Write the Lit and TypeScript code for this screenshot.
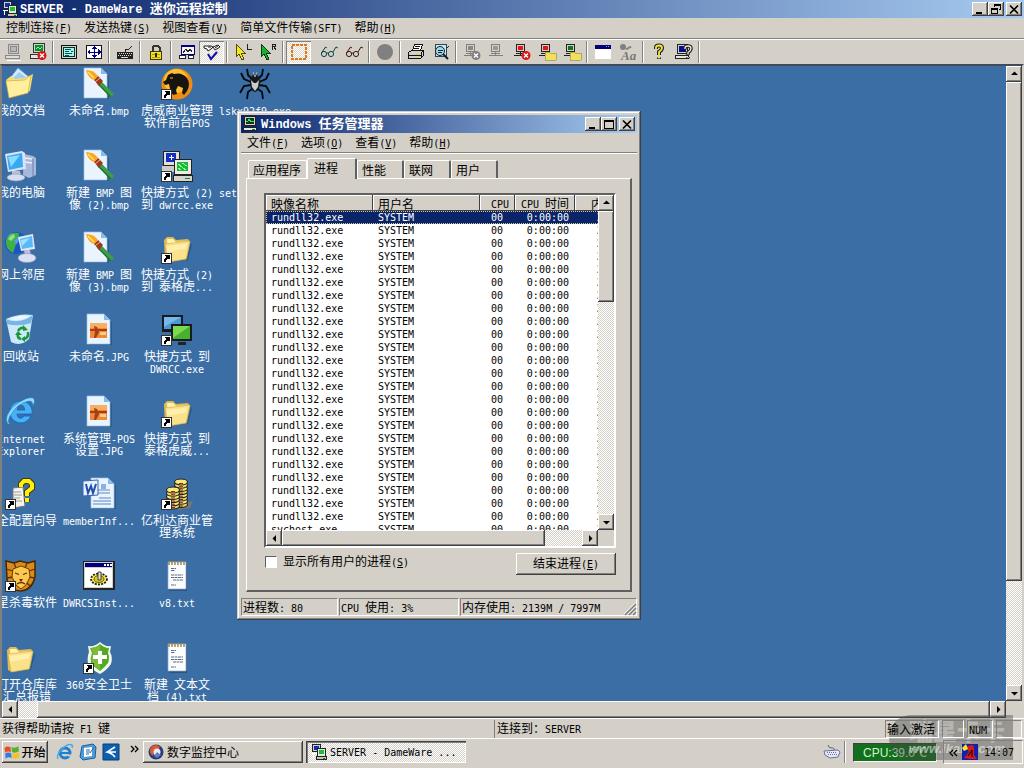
import { LitElement, html, svg, css } from "lit";
import { customElement, state } from "lit/decorators.js";

// Splits a caption into half-width (Latin) and full-width (CJK) runs.
const t = (text: string) =>
  html`<span class="t">${text.split(/([\x20-\x7e]+)/).filter(Boolean).map((p) => (/^[\x20-\x7e]/.test(p) ? html`<span class="l">${p}</span>` : p))}</span>`;
// Caption with an underlined access key.
const k = (text: string, key: string) => html`<span class="t">${text}<span class="l">(<u>${key}</u>)</span></span>`;

const ico = (body: unknown, size = 16, box = size) =>
  html`<svg class="ico" width=${size} height=${size} viewBox="0 0 ${box} ${box}" aria-hidden="true">${body}</svg>`;

/* ---- small glyphs ---- */
const arrows: Record<string, string> = { up: "M1 5h7L4.500 1.500z", down: "M1 3h7L4.500 6.500z", left: "M6 1v7L2.500 4.500z", right: "M3 1v7L6.500 4.500z" };
const arrow = (d: string) => ico(svg`<path d=${arrows[d]} fill="#000"/>`, 9);
const min = svg`<path d="M1 8h6v2H1z"/>`;
const max = svg`<path d="M0 1h10v9H0zM1 3v6h8V3z" fill-rule="evenodd"/>`;
const restore = svg`<path d="M3 0h7v6H8V5h1V2H4v1H3zM0 4h7v6H0zM1 6v3h5V6z" fill-rule="evenodd"/>`;
const close = svg`<path d="M1 1.500l8 8M9 1.500l-8 8" stroke="#000" stroke-width="1.700"/>`;

const twoPc = svg`<g shape-rendering="crispEdges"><path fill="#d4d0c8" stroke="#222" d="M1.500.500h8v7h-8z"/><path fill="#0a30c0" d="M3 2h5v4H3z"/><path d="M1 9h5v1H1zM2 10h1v4H2z" fill="#fff"/><path fill="#e8e6e0" stroke="#222" d="M6.500 4.500h8v8h-8z"/><path fill="#18c030" d="M8 6h5v4H8z"/><path fill="#c8c4bc" stroke="#222" d="M5.500 12.500h10v3h-10z"/><path d="M12 14h2" stroke="#080"/></g>`;
const taskIcon = svg`<g shape-rendering="crispEdges"><path fill="#d4d0c8" stroke="#222" d="M1.500.500h11v9h-11z"/><path fill="#043c20" d="M3 2h8v6H3z"/><path d="M3 5h2l1-2 2 3 1-1h2" stroke="#3fe060" fill="none"/><path fill="#e8e6e0" stroke="#222" d="M.500 11.500h13v3H.500z"/><path d="M9 13h3" stroke="#080"/></g>`;

/* ---- toolbar ---- */
const pc = (screen: string, body = "#d4d0c8", line = "#222") =>
  svg`<path fill=${body} stroke=${line} d="M3.500 1.500h8v7h-8z"/><path fill=${screen} d="M5 3h5v4H5z"/><path d="M7.500 9v3M1 12.500h14M3 10.500h9" stroke=${line}/>`;
const redX = svg`<g shape-rendering="auto"><circle cx="13" cy="12.500" r="4.500" fill="#d81818"/><path d="M11 10.500l4 4m0-4l-4 4" stroke="#fff" stroke-width="1.300"/></g>`;
const greyX = svg`<g shape-rendering="auto"><circle cx="13" cy="12.500" r="4.500" fill="#808080"/><path d="M11 10.500l4 4m0-4l-4 4" stroke="#fff" stroke-width="1.300"/></g>`;
const folderS = svg`<path d="M7 9h4l1 1h6v7H7z" fill="#f0e060" stroke="#988830" stroke-width=".6"/>`;
const cursor = (c: string, dark: string) => svg`<path d="M2 1v13l3-3 3 6 2-1-3-6h4z" fill=${c} stroke=${dark}/>`;
const glasses = (dark: string) =>
  svg`<g fill="none" stroke=${dark} shape-rendering="auto"><circle cx="4" cy="11" r="2.600"/><circle cx="11" cy="11" r="2.600"/><path d="M6.500 10h2M1.500 10l4-6 1.500 1M13 9l3-5 2 1"/></g>`;

type Tool = { n: string; i?: unknown; on?: boolean; shift?: boolean };
const sep: Tool = { n: "|" };
const tools: Tool[] = [
  { n: "连接", i: svg`<path fill="#c8c8c8" stroke="#888" d="M4.500 1.500h10v9h-10z"/><path fill="#b8b8b8" stroke="#888" d="M6.500 3.500h6v5h-6z"/><path fill="#ddd" stroke="#888" d="M1.500 12.500h14v3h-14z"/><path d="M3 17h14" stroke="#fff"/>` },
  { n: "断开", i: svg`<path fill="#d4d0c8" stroke="#333" d="M4.500.500h11v9h-11z"/><path fill="#0a9030" d="M6 2h8v6H6z"/><path d="M7 6l2-2 2 2 2-2" stroke="#8f8" fill="none"/><path fill="#e8e4dc" stroke="#333" d="M1.500 11.500h14v4h-14z"/>${redX}` },
  sep,
  { n: "全屏", i: svg`<path fill="#d4d0c8" stroke="#111" d="M1.500 2.500h15v13h-15z"/><path fill="#a8f0e8" stroke="#033" d="M3.500 4.500h11v9h-11z"/><path d="M5 6.500h6M5 8.500h4M5 10.500h7M11 8.500h2M5 12h4" stroke="#055"/>` },
  { n: "缩放", i: svg`<path fill="#fff" stroke="#112" d="M1.500 2.500h15v13h-15z"/><path d="M9 4v10M3 9h12" stroke="#008" /><path fill="#008" d="M9 3l3 3H6zM9 15l3-3H6zM2 9l3-3v6zM16 9l-3-3v6z"/>` },
  sep,
  { n: "发送键", i: svg`<path d="M9 9V6h4l3-3" fill="none" stroke="#222"/><path fill="#222" d="M1 9h16v7H1z"/><path stroke="#ddd" stroke-dasharray="1 1" d="M3 10.500h13M2 12.500h13"/><path stroke="#ddd" d="M5 14.500h7"/>` },
  sep,
  { n: "锁定", i: svg`<path d="M5.500 8V4.500l2-2h3l2 2V8" fill="none" stroke="#333" stroke-width="2"/><path fill="#f0e020" stroke="#443800" d="M3.500 8.500h11v8h-11z"/><path d="M5 11h8M5 14h8" stroke="#b0a000"/><path d="M8 10h2v4H8z" fill="#222"/>` },
  sep,
  { n: "视图选项", i: svg`<path fill="#f4f4f4" stroke="#008" d="M3.500 2.500h13v9h-13z"/><path d="M4 3h12" stroke="#008" stroke-width="2"/><path d="M5 10l3-4 2 3 2-3 2 3" fill="none" stroke="#222"/><path fill="#fff" stroke="#222" d="M1.500 12.500h6v3h-6zM10.500 12.500h5v3h-5z"/>` },
  { n: "监视", on: true, i: svg`<g shape-rendering="auto"><path d="M1 3h7l2 1-2 2-3 2-1-2-3-1zM10 4l5-2 2 2-5 3zM5 4h3M12 5l3-2" fill="#fff" stroke="#222"/><path d="M5 11l3 5 6-7" fill="none" stroke="#1010a0" stroke-width="2"/></g>` },
  sep,
  { n: "左键", i: svg`${cursor("#f0e820", "#554c00")}<path d="M13.500 1v5h4" fill="none" stroke="#222"/>` },
  { n: "右键", i: svg`${cursor("#18b030", "#043c10")}<path d="M13.500 7V1.500h3v2h-3M15 4l2 3" fill="none" stroke="#222"/>` },
  sep,
  { n: "选框", on: true, i: svg`<path fill="none" stroke="#e07818" stroke-width="2" stroke-dasharray="3 1" d="M2 2h14v14H2z"/>` },
  { n: "查看", shift: true, i: glasses("#054848") },
  { n: "只读", i: glasses("#401818") },
  sep,
  { n: "录制", i: svg`<circle cx="9" cy="9" r="8" fill="#808080" shape-rendering="auto"/>` },
  sep,
  { n: "打印", i: svg`<path fill="#fff" stroke="#111" d="M5.500 7.500l2-6h8l-2 6z"/><path d="M8 3.500h5M7 5.500h5" stroke="#111"/><path fill="#d0d0c8" stroke="#111" d="M1.500 9.500l3-2h12v5l-3 3h-12z"/><path d="M2 12.500h12M14 15v-5l3-3" stroke="#111" fill="none"/><path d="M9 11h3" stroke="#dd0" />` },
  { n: "预览", i: svg`<path fill="#c8e8f0" stroke="#345" d="M3.500 1.500h11v12h-11z"/><g shape-rendering="auto"><circle cx="8" cy="8" r="4.500" fill="#9fd8e8" stroke="#123"/><path d="M11 11l5 5" stroke="#123" stroke-width="2"/></g><path d="M6 7h5M6 9h4M15 5l2-2" stroke="#222"/>` },
  sep,
  { n: "停止服务", i: svg`${pc("#888", "#d4d0c8", "#808080")}${greyX}` },
  { n: "安装服务", i: pc("#999", "#d4d0c8", "#808080") },
  { n: "移除服务", i: svg`${pc("#e01818")}${redX}` },
  { n: "远程文件", i: svg`${pc("#e01818")}${folderS}` },
  { n: "本地文件", i: svg`${pc("#087818")}${folderS}` },
  sep,
  { n: "窗口", i: svg`<path fill="#fff" d="M1 2h16v14H1z"/><path fill="#000078" d="M1 2h16v4H1z"/><path d="M12 3.500h4" stroke="#99f" stroke-dasharray="1 1"/>` },
  { n: "字体", i: svg`<g shape-rendering="auto"><circle cx="4" cy="4" r="3" fill="#808080"/><path d="M6 6l5-3 2 1-5 3z" fill="#808080"/><text x="2" y="17" font-family="Liberation Serif" font-style="italic" font-weight="bold" font-size="13" fill="#777">Aa</text></g>` },
  sep,
  { n: "帮助", i: svg`<g shape-rendering="auto" fill="none"><path d="M6 6V4.500Q6 2.500 9 2.500t3 2.500q0 2-3 4v3M9 14.500v1.500" stroke="#222" stroke-width="4"/><path d="M6 6V4.500Q6 2.500 9 2.500t3 2.500q0 2-3 4v3M9 14v1.500" stroke="#f4ec30" stroke-width="1.800"/></g>` },
  { n: "关于", i: svg`<path fill="#d4d0c8" stroke="#222" d="M2.500 1.500h10v9h-10z"/><path fill="#001090" d="M4 3h7v6H4z"/><path fill="#e8e4dc" stroke="#222" d="M.500 12.500h13v3H.500z"/><g shape-rendering="auto" fill="none"><path d="M10 6.500V5q0-2 3-2t3 2.500q0 2-3 4v2.500M13 14v1.500" stroke="#222" stroke-width="3.500"/><path d="M10 6V5q0-2 3-2t3 2.500q0 2-3 4v2M13 14v1" stroke="#f0ecd0" stroke-width="1.300"/></g>` },
  sep,
];

/* ---- desktop ---- */
const short = svg`<g shape-rendering="crispEdges"><path fill="#fff" stroke="#333" d="M.500 21.500h10v10H.500z"/><path d="M4 23h5v5L7.500 26.500Q4.500 27 5 30H3.500Q2.500 26.500 5.800 25z" fill="#000"/></g>`;
const folderShape = (x: number) =>
  svg`<g transform="translate(${x} 0)"><path d="M3 28L2 8l3-3h6l3 3 12-1 2 3-3 17-18 3z" fill="#e0bc50"/><path d="M5 7h6l3 3 11-1v15L6 27z" fill="#fff3b0"/><path d="M3 12l25-3-4 18-18 3z" fill="#fae28c" stroke="#d0a840" stroke-width=".6"/><path d="M5 14l20-2.500-1 5L5 20z" fill="#fff2b4" opacity=".8"/><path d="M29 11l1 2-4 15-2 1z" fill="#204878" opacity=".5"/></g>`;
const page = svg`<path d="M5 1h17l6 6v23H5z" fill="#1c3c66" opacity=".4" transform="translate(1 1)"/><path d="M4 0h17l6 6v24H4z" fill="#eaf4fe" stroke="#9cc0e8" stroke-width=".7"/><path d="M21 0v6h6z" fill="#88b8ec"/>`;
const bmp = svg`<g transform="translate(-3 0)">${page}</g><path d="M14 15l3-3 14 14-3 4z" fill="#3c9c48"/><path d="M15 16l13 13" stroke="#1c6c30" stroke-width="1.200"/><path d="M11 12l4-4 5 5-4 5z" fill="#a03818"/><path d="M12 14l5-4" stroke="#e0b8a0"/><path d="M3 2q8 0 12 6l-4 4Q5 10 3 2z" fill="#f8a818"/><path d="M5 4l6 6" stroke="#ffe070" stroke-width="1.500"/>`;
const jpg = svg`${page}<path d="M7 9h17v15H7z" fill="#f08838"/><path d="M7 9h17v5H7z" fill="#f8b060"/><path d="M7 15h17v2H7z" fill="#b03818"/><path d="M11 12l3 1 2 5-3 6h-2l1-7z" fill="#a04018"/><path d="M17 18h6v3h-6z" fill="#ffd080"/>`;
const txt = svg`<path d="M8 3h18v28H8z" fill="#1c3c66" opacity=".5"/><path d="M7 2h18v27H7z" fill="#fafcff" stroke="#98a8c0" stroke-width=".7"/><path d="M8 1v4M11 1v4M14 1v4M17 1v4M20 1v4M23 1v4" stroke="#a08850" stroke-width="1.500"/><path d="M10 8.500h5M10 10.500h4M10 15h12M10 17.500h12M12 20h10M10 25h5" stroke="#5c6c80" stroke-dasharray="3 .5"/>`;
const xpPc = svg`<path d="M19 4l9 2 3 2v17l-7 3-6-3z" fill="#a8b8dc"/><path d="M20 8l7 1M20 12l7 1" stroke="#eef" stroke-width="1.500"/><path d="M28 9v18" stroke="#7080b0"/><path d="M0 4l17-3 3 2 1 16-18 3z" fill="#d8e4f8"/><path d="M2 6l15-3 1 14-14 3z" fill="#38a8f0"/><path d="M3 7l12-2-9 12z" fill="#88dcff"/><path d="M7 21h8l1 5H7z" fill="#b8c0dc"/><ellipse cx="11" cy="27.500" rx="9" ry="3.500" fill="#d8dcf0" stroke="#8890b0" stroke-width=".6"/>`;
const net = svg`<circle cx="11" cy="11" r="11" fill="#1858c0"/><circle cx="8" cy="7" r="6" fill="#50a0f0"/><path d="M1 8q4-9 13-7 0 6-5 7l2 4-3 9q-6-3-7-9z" fill="#40b048"/><path d="M3 7q2-4 6-5l1 3-4 4z" fill="#90e080"/><path d="M13 5l15-3 2 15-14 2z" fill="#e0e8f8"/><path d="M15 7l12-3 1 11-11 2z" fill="#58b8f8"/><path d="M16 8l9-2-8 8z" fill="#a0e0ff"/><path d="M19 18h6l1 6h-6z" fill="#b8c0dc"/><ellipse cx="22" cy="26" rx="9" ry="4.500" fill="#dce0f4" stroke="#8890b0" stroke-width=".6"/>`;
const bin = svg`<path d="M1 5q13-6 27-4l-4 24q-8 8-18 3z" fill="#cce8fa"/><path d="M1 5q13 6 27-4l-2 8Q14 13 2 10z" fill="#78b4e4"/><path d="M4 5q11-5 21-3-9 6-21 3z" fill="#eaf8ff"/><g fill="none" stroke="#189838" stroke-width="2.600"><path d="M13 17q3-5 7-2M23 18q1 6-4 7M16 25q-4-1-3-5"/></g><path d="M18 11l5 5-5 1zM20 22v6l-4-3zM10 21l3-4 4 4z" fill="#189838"/>`;
const ie = svg`<path d="M16 5a11 11 0 1 0 10 15h-7q-3 4-6 1-1-1-1-3h15A11 11 0 0 0 16 5zM12 14q1-5 4-5t4 5z" fill="#48b0f4" stroke="#1068b8" stroke-width=".8"/><path d="M3 28q-5-7 6-18Q22 0 28 2q3 2 0 8 0-5-4-5Q12 7 5 20q-3 6 0 8z" fill="#8cdcff" stroke="#2078c0" stroke-width=".5"/>`;
const question = svg`<path d="M8 10l10-1 2 19-12 2z" fill="#f4f4ec" stroke="#777"/><path d="M9 14h7M9 17h8M9 20h6M9 23h8" stroke="#999"/><path d="M16 9V6l3-3h5l3 3v4l-5 4v4M22 21v3" fill="none" stroke="#443c00" stroke-width="6"/><path d="M16 9V6l3-3h5l3 3v4l-5 4v4M22 20v4" fill="none" stroke="#ffee10" stroke-width="4"/>`;
const word = svg`<g transform="translate(4 0)">${page}</g><path d="M14 12h13M14 15h13M16 20h12M10 23h18M10 26h18" stroke="#5888c8"/><path d="M18 6h5v5h-5z" fill="#8cb0e0"/><path d="M0 3l15-1v15L0 18z" fill="#e8f0fc" stroke="#3868b0"/><path d="M3 6l2 9 3-7 2 7 3-9" fill="none" stroke="#2050a8" stroke-width="2"/>`;
const coins = (x: number, y: number, n: number) =>
  Array.from({ length: n }, (_, i) => svg`<ellipse cx=${x} cy=${y + (n - 1 - i) * 3.2} rx="6.500" ry="3" fill=${i % 2 ? "#f4ec78" : "#e8d860"} stroke="#222" stroke-width="1.100"/><path d="M${x - 2} ${y + (n - 1 - i) * 3.2 + 1.5}h4" stroke="#a02020"/>`);
const coinIcon = svg`<path d="M20 26l12-3-3 7-12 2z" fill="#777"/>${coins(20, 4, 8)}${coins(12, 12, 6)}`;
const panther = svg`<circle cx="16" cy="16" r="15.500" fill="#f08c10"/><circle cx="15" cy="13" r="12" fill="#ffc030"/><path d="M5 12l2-5 4-2 2 1q8-2 13 4 4 6 0 13l-3 4-2-2 1-5-5-2-2 4 1 4-4 1-3-6-1-5-4 1-2-3z" fill="#181410"/><path d="M9 10h3" stroke="#ffb020"/>`;
const spider = svg`<g fill="none" stroke="#080808" stroke-width="1.800"><path d="M13 11L9 7 8 1M12 14L5 11 2 5M12 17l-7 1-4 7M13 21l-4 3-1 7M19 11l4-4 1-6M20 14l7-3 3-6M20 17l7 1 4 7M19 21l4 3 1 7"/></g><ellipse cx="16" cy="15" rx="5" ry="9" fill="#181818"/><path d="M12 12l3 3h2l3-3-1 7-3 4-3-4z" fill="#c8ccd0"/><path d="M14 4l2 5 2-5" stroke="#aaa" fill="none"/>`;
const pcs = svg`<g shape-rendering="crispEdges"><path d="M2 1h16v14H2z" fill="#e4e0d8" stroke="#222"/><path d="M5 3h10v9H5z" fill="#1030c8"/><path d="M8 7.500h5M10.500 5v5" stroke="#fff"/><path d="M1 16h12v6H1z" fill="#d0ccc4"/><path d="M13 9h17v15H13z" fill="#f0ece4" stroke="#222"/><path d="M16 12h11v9H16z" fill="#18b838"/><path d="M17 14l8 6M17 18l3 2M21 13l5 3" stroke="#9f9"/><path d="M12 25h19v6H12z" fill="#d8d4cc" stroke="#222"/><path d="M24 28h5" stroke="#084"/></g>`;
const monitors = svg`<path d="M1 1h21v17H1z" fill="#181c20"/><path d="M3 3h17v12H3z" fill="#4898d8"/><path d="M3 3h17L3 13z" fill="#78b8e8"/><path d="M10 10h21v17H10z" fill="#181c20"/><path d="M12 12h17v13H12z" fill="#48b030"/><path d="M12 12h17L12 24z" fill="#80d850"/><path d="M17 28h8v3h-8z" fill="#222"/>`;
const lion = svg`<path d="M1 1l8 2 6-2 8 2 7-2v16q-3 13-14 14Q3 30 2 18z" fill="#dc8a1c" stroke="#442800" stroke-width="1.500"/><path d="M1 9l7 2M30 9l-6 2M2 18l6-1M30 18l-6-1M6 26l4-4M25 26l-4-4M9 3l2 5M22 3l-2 5" stroke="#5c3000" stroke-width="1.300"/><path d="M8 9l8-3 8 3 1 8-4 8-5 4-5-4-4-8z" fill="#fcc850" stroke="#6c3c08"/><path d="M10 13l4 1.500M22 13l-4 1.500M12 24q4-3 8 0" fill="none" stroke="#5c3000" stroke-width="1.300"/><path d="M14 19h4l-2 3z" fill="#5c3000"/>`;
const install = svg`<g shape-rendering="crispEdges"><path d="M0 1h32v29H0z" fill="#222"/><path d="M1 2h29v26H1z" fill="#d4d0c8"/><path d="M2 8h27v19H2z" fill="#fff"/><path d="M2 3h27v4H2z" fill="#000080"/><path d="M21 5h8" stroke="#fff" stroke-width="2" stroke-dasharray="2 1"/></g><ellipse cx="16" cy="19" rx="8" ry="5.500" fill="#f4e850" stroke="#222" stroke-width="1.800" stroke-dasharray="2 1.200"/><ellipse cx="16" cy="19" rx="5" ry="3.500" fill="#d8c830" stroke="#443c00" stroke-width=".8"/><path d="M15 12h3v8h-3z" fill="#ddd" stroke="#222" stroke-width=".8"/>`;
const shield = svg`<path d="M5 4q7 1 12-4 5 5 11 4l-1 6q3 5 1 12-4 6-11 10Q9 28 5 22q-1-7 1-12z" fill="#f0f8e8"/><path d="M7 6q6 0 10-4 4 4 9 4l-1 5q2 5 0 10-3 4-8 8-6-4-9-8-1-5 1-10z" fill="#58a828"/><path d="M17 3v25q-5-3-8-7-1-5 1-10L8 6q5 0 9-3z" fill="#7cbc38"/><path d="M15 9h4v4h5v4h-5v5h-4v-5h-5v-4h5z" fill="#fff"/>`;
const docs = svg`<path d="M13 0l12 10-9 9L6 9z" fill="#d8ecff" stroke="#78a8d8"/><path d="M14 4l8 6-8 6-6-6z" fill="#a0ccf4"/><path d="M1 12l5-4 4 3 10-1 8-4-3 17-19 6z" fill="#f8e070"/><path d="M1 13l19-1 6-5-3 18-19 5z" fill="#fff0a0" stroke="#d8a838" stroke-width=".7"/>`;

type Item = { i: unknown; s?: boolean; l: string[] } | null;
const items: Item[] = [
  { i: docs, l: ["我的文档"] }, { i: bmp, l: ["未命名.bmp"] }, { i: panther, s: true, l: ["虎威商业管理", "软件前台POS"] }, { i: spider, l: ["lskx92f9.exe"] },
  { i: xpPc, l: ["我的电脑"] }, { i: bmp, l: ["新建 BMP 图", "像 (2).bmp"] }, { i: pcs, s: true, l: ["快捷方式 (2)", "到 dwrcc.exe"] }, { i: svg``, l: ["setup001.exe"] },
  { i: net, l: ["网上邻居"] }, { i: bmp, l: ["新建 BMP 图", "像 (3).bmp"] }, { i: folderShape(1), s: true, l: ["快捷方式 (2)", "到 泰格虎..."] }, null,
  { i: bin, l: ["回收站"] }, { i: jpg, l: ["未命名.JPG"] }, { i: monitors, s: true, l: ["快捷方式 到", "DWRCC.exe"] }, null,
  { i: ie, l: ["Internet", "Explorer"] }, { i: jpg, l: ["系统管理-POS", "设置.JPG"] }, { i: folderShape(1), s: true, l: ["快捷方式 到", "泰格虎威..."] }, null,
  { i: question, s: true, l: ["安全配置向导"] }, { i: word, l: ["memberInf..."] }, { i: coinIcon, s: true, l: ["亿利达商业管", "理系统"] }, null,
  { i: lion, s: true, l: ["瑞星杀毒软件"] }, { i: install, l: ["DWRCSInst..."] }, { i: txt, l: ["v8.txt"] }, null,
  { i: folderShape(0), l: ["　打开仓库库", "　汇总报错"] }, { i: shield, s: true, l: ["360安全卫士"] }, { i: txt, l: ["新建 文本文", "档 (4).txt"] }, null,
];

const processes = [...Array(24).fill("rundll32.exe"), "svchost.exe"];

@customElement("app-root")
export class AppRoot extends LitElement {
  @state() private tab = 1;
  @state() private selected = 0;

  static styles = css`
    :host { display: block; height: 100vh; overflow: hidden; position: relative; background: #d4d0c8; color: #000; font: 12px/16px "Noto Sans CJK SC", sans-serif; }
    * { box-sizing: border-box; }
    button { font: inherit; color: inherit; border: 0; padding: 0; margin: 0; background: #d4d0c8; display: flex; align-items: center; justify-content: center; flex: none; }
    .ico { display: block; flex: none; overflow: visible; }
    .t { white-space: pre; }
    .l { font-family: "DejaVu Sans Mono", monospace; font-size: 10px; }
    .app { display: flex; flex-direction: column; height: 100%; }
    .raised { box-shadow: inset -1px -1px #404040, inset 1px 1px #fff, inset -2px -2px #808080; }
    .dither { background: repeating-conic-gradient(#fff 0 25%, #d4d0c8 0 50%) 0 0 / 2px 2px; }

    .title { display: flex; align-items: center; height: 18px; flex: none; gap: 2px; padding: 0 2px; color: #fff; font-weight: bold; background: linear-gradient(90deg, #0a246a, #a6caf0); }
    .title .t { flex: 1; font-size: 13px; }
    .title .l { font-family: "Liberation Mono", monospace; font-size: 12px; }
    .ctl { display: flex; }
    .ctl button { width: 16px; height: 14px; }
    .menu { display: flex; align-items: center; height: 20px; gap: 12px; padding: 0 6px; flex: none; }
    .menu button { background: none; }
    .toolbar { display: flex; align-items: center; height: 26px; flex: none; border-top: 1px solid #808080; box-shadow: inset 0 1px #fff; padding-top: 1px; overflow: hidden; }
    .toolbar button { width: 25px; height: 23px; background: none; }
    .toolbar button.on { background: repeating-conic-gradient(#fff 0 25%, #dcd8d0 0 50%) 0 0 / 2px 2px; box-shadow: inset 1px 1px #808080, inset -1px -1px #fff; }
    .toolbar .shift { margin-left: 5px; }
    .sep { width: 2px; height: 22px; margin: 0 2px; border-left: 1px solid #808080; border-right: 1px solid #fff; flex: none; }

    .frame { flex: 1; min-height: 0; display: grid; grid-template-columns: 1fr 16px; grid-template-rows: 1fr 17px; border: 2px solid #808080; border-top-color: #404a58; border-right-color: #d4d0c8; border-bottom: 0; }
    .desktop { position: relative; overflow: hidden; background: #3a6ea5; color: #fff; }
    .icons { display: grid; grid-template-columns: repeat(4, 78px); grid-auto-rows: 82px; margin: 2px 0 0 -20px; }
    .item { display: flex; flex-direction: column; align-items: center; gap: 4px; line-height: 12px; color: #fff; text-decoration: none; }
    .lines { display: flex; flex-direction: column; align-items: center; }
    .lines .t { height: 12px; }

    .vbar, .hbar { display: flex; }
    .vbar { flex-direction: column; }
    .vbar button { width: 16px; height: 16px; }
    .hbar button { width: 16px; height: 100%; }

    .win { position: absolute; left: 235px; top: 45px; width: 404px; padding: 4px; color: #000; background: #d4d0c8; box-shadow: inset -1px -1px #404040, inset 1px 1px #d4d0c8, inset -2px -2px #808080, inset 2px 2px #fff; }
    .win .menu { height: 21px; border-bottom: 1px solid #fff; box-shadow: inset 0 -1px #808080; }
    .body { padding: 3px 5px 6px; }
    .tabs { display: flex; align-items: flex-end; padding-left: 2px; height: 21px; }
    .tabs button { height: 18px; min-width: 47px; padding: 0 5px 0 4px; justify-content: flex-start; border: 1px solid #fff; border-bottom: 0; border-right: 2px solid #606060; border-radius: 2px 2px 0 0; }
    .tabs button:first-child { border-right: 1px solid #fff; min-width: 59px; }
    .tabs button.on { height: 21px; min-width: 50px; padding-bottom: 2px; margin-bottom: -1px; padding-left: 6px; position: relative; }
    .panel { border: 1px solid #fff; border-right: 2px solid #606060; border-bottom: 2px solid #606060; padding: 14px 14px 15px 17px; }
    .list { display: grid; grid-template-columns: 1fr 16px; grid-template-rows: 335px 16px; border: 2px solid #606060; border-right-color: #fff; border-bottom-color: #fff; }
    .rows { background: #fff; overflow: hidden; }
    table { border-collapse: separate; border-spacing: 0; table-layout: fixed; width: 376px; line-height: 13px; }
    th, td { padding: 0 5px; text-align: left; font-weight: normal; overflow: hidden; white-space: nowrap; }
    td { height: 13px; }
    th { height: 16px; background: #d4d0c8; box-shadow: inset -1px -1px #404040, inset 1px 1px #fff; }
    .r { text-align: right; padding-right: 6px; }
    td.cpu-col { padding-right: 12px; }
    .mem { text-align: right; padding-right: 3px; }
    td .l { display: block; line-height: 13px; }
    tr.sel td { background: #0a246a; color: #fff; }
    tr.sel { outline: 1px dotted #d8c890; outline-offset: -1px; }
    .foot { display: flex; align-items: flex-start; justify-content: space-between; margin-top: 5px; }
    .foot label { display: flex; align-items: center; gap: 6px; margin-left: 1px; }
    .foot input { appearance: none; width: 12px; height: 12px; margin: 0; background: #fff; border: 1px solid #606060; border-right-color: #fff; border-bottom-color: #fff; }
    .foot button { width: 100px; height: 22px; }
    .wstat { display: grid; grid-template-columns: 97px 120px 1fr; gap: 1px; position: relative; }
    .cell { border: 1px solid #808080; border-right-color: #fff; border-bottom-color: #fff; height: 18px; padding-left: 1px; line-height: 16px; }
    .w54 { width: 54px; }
    .w22 { width: 22px; }
    .w26 { width: 26px; }
    .grip { position: absolute; right: 1px; bottom: 1px; }

    .status { display: flex; align-items: center; height: 20px; flex: none; border-top: 1px solid #fff; padding: 0 2px; gap: 3px; }
    .grow { flex: 1; }
    .conn { flex: 0 1 388px; border-left: 1px solid #808080; padding-left: 2px; }
    .taskbar { display: flex; align-items: center; height: 30px; flex: none; border-top: 1px solid #fff; padding: 0 1px 3px 2px; }
    .start { width: 46px; height: 22px; gap: 1px; }
    .start b { font-weight: 500; }
    .quick { display: flex; gap: 7px; margin: 0 11px 0 9px; }
    .quick button { background: none; }
    .more { background: none; width: 13px; padding-bottom: 8px; justify-content: flex-start; }
    .taskbar .task { flex: 0 1 160px; height: 22px; justify-content: flex-start; padding-left: 5px; gap: 3px; margin-right: 3px; overflow: hidden; }
    .task.on { box-shadow: inset 1px 1px #404040, inset 2px 2px #808080, inset -1px -1px #fff; }
    .tray { display: flex; align-items: center; margin-left: auto; }
    .tray .sep { margin: 0 7px 0 4px; }
    .cpu, .clock, .status .cell { position: relative; }
    .cpu { width: 84px; height: 19px; margin-right: 6px; background: #12701c; border: 1px solid #404040; border-right-color: #fff; border-bottom-color: #fff; color: #d0f4d0; font: 12px/18px "Liberation Sans", "Noto Sans CJK SC", sans-serif; text-align: center; }
    .clock { display: flex; align-items: center; width: 80px; height: 24px; gap: 4px; padding-left: 5px; border: 1px solid #808080; border-right-color: #fff; border-bottom-color: #fff; }
    .clock time { margin-left: 2px; }
    .mark { position: absolute; right: 11px; bottom: 8px; width: 124px; height: 45px; border-radius: 22px 0 0 22px; background: rgba(70, 70, 66, 0.42); color: rgba(235, 235, 230, 0.4); display: flex; flex-direction: column; align-items: flex-end; padding: 3px 8px; pointer-events: none; }
    .mark b { font-size: 24px; line-height: 24px; font-weight: 900; }
    .mark i { font: italic bold 13px/13px "Liberation Sans", sans-serif; color: rgba(240, 240, 235, 0.6); }
    /* Captions of the status cells and the clock stay readable above the badge. */
    .status .cell, .clock { z-index: 1; }
  `;

  private bar(v: boolean, thumb: string, before: string, after: string) {
    const [a, b] = v ? ["up", "down"] : ["left", "right"];
    return html`<div class=${v ? "vbar" : "hbar"}>
      <button class="raised" aria-label=${a}>${arrow(a)}</button>
      <div class="dither" style="flex:0 0 ${before}"></div>
      <div class="raised" style="flex:${thumb} 1 0px"></div>
      <div class="dither" style="flex:${after} 1 0px"></div>
      <button class="raised" aria-label=${b}>${arrow(b)}</button>
    </div>`;
  }

  private controls(middle: unknown) {
    return html`<div class="ctl">
        <button class="raised" aria-label="最小化">${ico(min, 10)}</button>
        <button class="raised" aria-label="最大化">${ico(middle, 10)}</button>
      </div>
      <div class="ctl"><button class="raised" aria-label="关闭">${ico(close, 10)}</button></div>`;
  }

  private manager() {
    return html`<section class="win">
      <div class="title">${ico(taskIcon)}${t("Windows 任务管理器")}${this.controls(max)}</div>
      <nav class="menu"><button>${k("文件", "F")}</button><button>${k("选项", "O")}</button><button>${k("查看", "V")}</button><button>${k("帮助", "H")}</button></nav>
      <div class="body">
        <div class="tabs" role="tablist">
          ${["应用程序", "进程", "性能", "联网", "用户"].map((n, i) => html`<button role="tab" class=${i === this.tab ? "on" : ""} @click=${() => (this.tab = i)}>${n}</button>`)}
        </div>
        <div class="panel">
          <div class="list">
            <div class="rows">
              <table>
                <colgroup><col style="width:107px" /><col style="width:107px" /><col style="width:35px" /><col style="width:60px" /><col style="width:67px" /></colgroup>
                <thead><tr><th>映像名称</th><th>用户名</th><th class="r">${t("CPU")}</th><th class="r">${t("CPU 时间")}</th><th class="mem">内存使用</th></tr></thead>
                <tbody>
                  ${processes.map((p, i) => html`<tr class=${i === this.selected ? "sel" : ""} @click=${() => (this.selected = i)}>
                    <td>${t(p)}</td><td>${t("SYSTEM")}</td><td class="r cpu-col">${t("00")}</td><td class="r">${t("0:00:00")}</td><td class="mem">${t("2,140 K")}</td></tr>`)}
                </tbody>
              </table>
            </div>
            ${this.bar(true, "91", "0px", "212")}
            ${this.bar(false, "262", "0px", "37")}
            <div></div>
          </div>
          <div class="foot">
            <label><input type="checkbox" />${k("显示所有用户的进程", "S")}</label>
            <button class="raised">${k("结束进程", "E")}</button>
          </div>
        </div>
      </div>
      <div class="wstat">
        <div class="cell">${t("进程数: 80")}</div><div class="cell">${t("CPU 使用: 3%")}</div><div class="cell">${t("内存使用: 2139M / 7997M")}</div>
        <div class="grip">${ico(svg`<path d="M1 12L12 1M5 12l7-7M9 12l3-3" stroke="#808080" stroke-width="1.500"/><path d="M0 11L11 0M4 11l7-7M8 11l3-3" stroke="#fff" stroke-width=".7"/>`, 12)}</div>
      </div>
    </section>`;
  }

  render() {
    return html`<div class="app">
      <header class="title">${ico(twoPc)}${t("SERVER - DameWare 迷你远程控制")}${this.controls(restore)}</header>
      <nav class="menu">
        <button>${k("控制连接", "F")}</button><button>${k("发送热键", "S")}</button><button>${k("视图查看", "V")}</button><button>${t("简单文件传输(SFT)")}</button><button>${k("帮助", "H")}</button>
      </nav>
      <div class="toolbar">
        ${tools.map((b) => b.n === "|" ? html`<div class="sep"></div>` : html`<button class="${b.on ? "on" : ""} ${b.shift ? "shift" : ""}" aria-label=${b.n}>${ico(svg`<g shape-rendering="crispEdges">${b.i}</g>`, 18)}</button>`)}
      </div>
      <main class="frame">
        <div class="desktop">
          <div class="icons">
            ${items.map((d) => d ? html`<a class="item" href="#">${ico(svg`${d.i}${d.s ? short : ""}`, 32)}<span class="lines">${d.l.map(t)}</span></a>` : html`<span></span>`)}
          </div>
          ${this.manager()}
        </div>
        ${this.bar(true, "498", "0px", "104")}
        ${this.bar(false, "1", "19px", "0")}
        <div></div>
      </main>
      <footer class="status">
        <span class="grow">${t("获得帮助请按 F1 键")}</span>
        <span class="conn">${t("连接到：SERVER")}</span>
        <span class="cell w54">输入激活</span><span class="cell w22"></span><span class="cell w26">${t("NUM")}</span><span class="cell w26"></span>
      </footer>
      <div class="taskbar">
        <button class="start raised">${ico(svg`<g transform="rotate(-6 8 8)"><path d="M1 3q3-2 6 0v5q-3-2-6 0z" fill="#e85020"/><path d="M8 3q3 2 7 0v5q-4 2-7 0z" fill="#58b030"/><path d="M1 9q3-2 6 0v5q-3-2-6 0z" fill="#3878e0"/><path d="M8 9q3 2 7 0v5q-4 2-7 0z" fill="#f8c020"/></g>`)}<b>开始</b></button>
        <div class="quick">
          <button aria-label="Internet Explorer">${ico(svg`<circle cx="8" cy="9" r="5" fill="none" stroke="#1c80d0" stroke-width="3"/><path d="M4 9h10" stroke="#1c80d0" stroke-width="2"/><path d="M11 10.500h5v2h-5z" fill="#d4d0c8"/><path d="M1 15Q-1 11 5 5t10-4q1 1 0 3" fill="none" stroke="#48a8e8" stroke-width="1.500"/>`)}</button>
          <button aria-label="显示桌面">${ico(svg`<path d="M2 2l11-2 3 3-1 11-12 2-3-3z" fill="#4c9cd8" stroke="#1c5c9c"/><path d="M4 4l8-1v9l-8 1z" fill="#fff"/><path d="M6 6h4M6 8h4M6 10h3M10 9l4-6" stroke="#2868a8"/>`)}</button>
          <button aria-label="远程连接">${ico(svg`<path d="M0 0h16v16H0z" fill="#0c60b0" stroke="#083c78"/><path d="M12 3L4 8q5 1 8 5M4 8h9" stroke="#fff" stroke-width="1.600" fill="none"/>`)}</button>
        </div>
        <button class="more" aria-label="更多">${ico(svg`<path d="M1 2l3 3-3 3M5 2l3 3-3 3" fill="none" stroke="#000" stroke-width="1.300"/>`, 9)}</button>
        <button class="task raised">${ico(svg`<circle cx="8" cy="8" r="7.500" fill="#283c78"/><path d="M3 3q5-4 9 0l-2 3-4 1-1 5Q0 9 3 3z" fill="#e05830"/><circle cx="9" cy="8" r="3.500" fill="#e8ecf8"/><path d="M9 8l4 3-4 3-3-2z" fill="#5c80c8"/>`)}${t("数字监控中心")}</button>
        <button class="task on dither">${ico(twoPc)}${t("SERVER - DameWare ...")}</button>
        <div class="tray">
          ${ico(svg`<path d="M4 1q0 3 4 3t1 3" stroke="#667" fill="none"/><path d="M0 7l14-1 2 2-2 5-8 1-5-3z" fill="#e4e8f8" stroke="#6870a0"/><path d="M3 8.500h10M4 10.500h9" stroke="#6870a0" stroke-dasharray="1 1"/>`)}
          <div class="sep"></div>
          <div class="cpu">CPU:39.0℃</div>
          <div class="clock">${ico(svg`<path d="M4 2L1 5l3 3M8 2L5 5l3 3" fill="none" stroke="#000" stroke-width="1.300"/>`, 9)}${ico(svg`<path d="M0 0h16v16H0z" fill="#1420a8"/><path d="M4 3l5-2 3 1v9l3 4H8l-6-1 5-6z" fill="#d81818"/><path d="M0 4l4-4 2 5-4 2z" fill="#f8e820"/><path d="M6 12l4-6v7" stroke="#000" fill="none"/>`)}<time>${t("14:07")}</time></div>
        </div>
      </div>
      <div class="mark"><b>瑞星卡卡</b><i>www.ikaka.com</i></div>
    </div>`;
  }
}
